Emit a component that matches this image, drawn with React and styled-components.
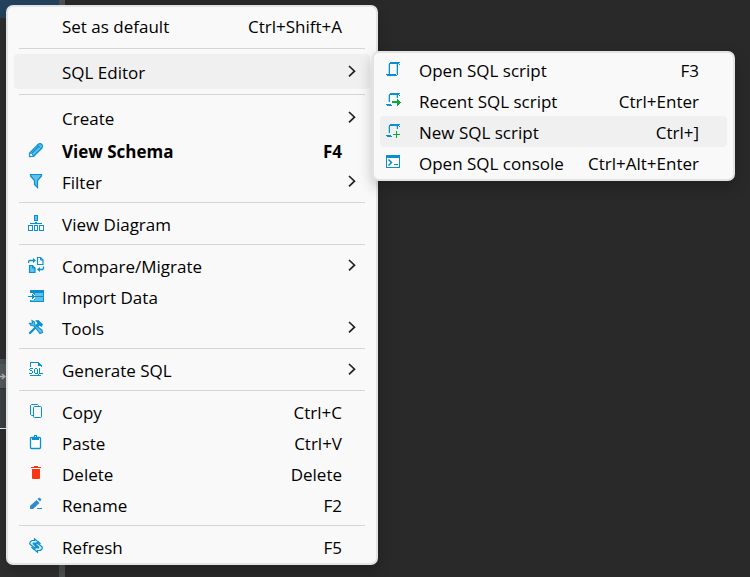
import React from "react";
import styled, { createGlobalStyle, css } from "styled-components";

const GlobalStyle = createGlobalStyle`
  *, *::before, *::after { box-sizing: border-box; }
  body {
    margin: 0;
    background: #292929;
    font-family: "Open Sans", "Noto Sans", sans-serif;
    font-size: 17px;
    color: #000;
  }
`;

const Workspace = styled.main`
  position: relative;
  display: flex;
  min-height: 100vh;
  overflow: hidden;
  background: #292929;
`;

const Sidebar = styled.div`
  display: flex;
  flex-direction: column;
  width: 59px;
  background: #2f2f2f;
`;

const SelectedNode = styled.div`
  height: 18px;
  background: #24425e;
`;

const TreeSpace = styled.div`
  height: 341px;
`;

const PanelTab = styled.div`
  display: flex;
  align-items: center;
  height: 29px;
  background: #555b5e;
  border-top: 5px solid #485156;
`;

const PanelBody = styled.div`
  height: 41px;
  background: #3b4144;
  border-top: 1px solid #303538;
  border-bottom: 1px solid #f2f2f2;
`;

const Splitter = styled.div`
  width: 6px;
  background: #4b5051;
`;

const MenuPanel = styled.div`
  position: absolute;
  left: ${({ $left }) => $left}px;
  top: ${({ $top }) => $top}px;
  min-width: ${({ $minWidth }) => $minWidth}px;
  padding: 1px 6px;
  border: 2px solid #e3e3e3;
  border-radius: 7px;
  background: #f9f9f9;
  box-shadow: 0 6px 14px rgba(0, 0, 0, 0.22);
`;

const Divider = styled.hr`
  height: 1px;
  margin: 5px;
  border: 0;
  background: #d5d5d5;
`;

const MenuItem = styled.button`
  display: grid;
  grid-template-columns: 17px 1fr auto 28px;
  align-items: center;
  width: 100%;
  height: ${({ $tall }) => ($tall ? 35 : 31)}px;
  padding: 0 0 0 ${({ $inset }) => $inset}px;
  border: 0;
  border-radius: 4px;
  background: ${({ $active }) => ($active ? "#f0f0f0" : "transparent")};
  color: inherit;
  font: inherit;
  line-height: 25px;
  text-align: left;
  white-space: nowrap;
  ${({ $strong }) => $strong && css`font-weight: 700;`}
`;

const Label = styled.span`
  padding: 2px 20px 0 17px;
`;

const Shortcut = styled.span`
  padding-top: 2px;
`;

const IconSvg = styled.svg`
  display: block;
  width: 17px;
  height: 17px;
`;

const ArrowSvg = styled.svg`
  display: block;
  width: 8px;
  height: 13px;
  margin-left: 6px;
`;

const TabArrow = styled.svg`
  display: block;
  width: 6px;
  height: 9px;
`;

const BLUE = "#0a8fd0";
const LIGHT = "#5fc0ec";
const PALE = "#a9dbf2";
const GREEN = "#0aa83c";

const icons = {
  pencil: (
    <>
      <path d="M1.500 11.200 10.300 2.200Q12.300 .8 13.800 2.500T14 6L5.500 14.300 1.500 14.500Z" fill={LIGHT} stroke={BLUE} strokeWidth="1.200" />
      <path d="M1.700 11.200H3.500L5 13V14.400H1.700Z" fill="#fff" stroke={BLUE} />
      <path d="M4 11 11 4" stroke={BLUE} strokeWidth="1.200" />
      <path d="M9.500 3 13 6.500" stroke={BLUE} />
    </>
  ),
  filter: (
    <path d="M2.500 1.500H13.500V3L9.500 7.500V14.500L6.500 11.500V7.500L2.500 3Z" fill={LIGHT} stroke={BLUE} strokeWidth="1.200" />
  ),
  diagram: (
    <g shapeRendering="crispEdges">
      <path d="M6 0h4v6H6z" fill={BLUE} />
      <path d="M7 1h2v4H7z" fill={LIGHT} />
      <path d="M7 7h2v1h5v1H2V8h5z" fill={BLUE} />
      <path d="M0 10h5v6H0zM6 10h4v6H6zM11 10h5v6h-5z" fill={BLUE} />
      <path d="M1 11h3v4H1zM7 11h2v4H7zM12 11h3v4h-3z" fill="#fff" />
    </g>
  ),
  compare: (
    <>
      <path d="M9.500 .5h3l2.500 2.500v4.500H9.500z" fill="#fff" stroke={BLUE} strokeWidth="1.200" />
      <path d="M12.500 .5V3H15" fill="none" stroke={BLUE} />
      <path d="M1.500 8.500h3L7 11v4.500H1.500z" fill={LIGHT} stroke={BLUE} strokeWidth="1.200" />
      <path d="M4.500 8.500V11H7" fill="none" stroke={BLUE} />
      <path d="M.5 6V4.500L1.500 3.500H6M15.500 9.500V11.500l-1 1H10.500" fill="none" stroke={BLUE} strokeWidth="1.300" />
      <path d="M5 1 8 3.500 5 6zM12 10 9 12.500 12 15z" fill={BLUE} />
    </>
  ),
  import: (
    <g shapeRendering="crispEdges">
      <path d="M2 2h14v12H2z" fill={BLUE} />
      <path d="M7 5h8v3H7zM7 9h8v4H7zM3 12h4v1H3z" fill={LIGHT} />
      <path d="M0 5h5v1h1v1h1v4H6v1H0z" fill="#f9f9f9" />
      <path d="M0 8h4V6h1v1h1v1h1v1H6v1H5v1H4V9H0z" fill={BLUE} />
    </g>
  ),
  tools: (
    <>
      <path d="M2 14 9 7" stroke={BLUE} strokeWidth="2.200" strokeLinecap="round" />
      <path d="M7 1.500 10.500 1 15 5.500 13.500 8 11.500 6.500 9.500 8.500 7.500 6.500 9.500 4Z" fill={BLUE} />
      <path d="M1.500 4.500 3 6.500 6 7l6 7.500 2.500-1L14 11 7 6 6.500 3 4 1.500 4.500 4Z" fill={LIGHT} stroke={BLUE} strokeWidth="1.100" />
    </>
  ),
  sql: (
    <g shapeRendering="crispEdges" fill={BLUE}>
      <path d="M2 1h8v1H3v4H2zM10 1h1v1h1v1h1v1h1v2h-1V5h-3z" />
      <path d="M2 7h3v1H2zM1 8h1v1H1zM2 9h2v1H2zM4 10h1v2H4zM1 12h3v1H1z" />
      <path d="M7 7h2v1H7zM6 8h1v4H6zM9 8h1v4H9zM7 12h3v1H7zM10 13h1v1h-1z" />
      <path d="M11 7h1v5h3v1h-4zM2 14h11v1H2z" />
    </g>
  ),
  copy: (
    <g fill="#f9f9f9" stroke={BLUE} strokeWidth="1">
      <path d="M10.500 3V2.500l-1-1H3.500l-1 1v9l1 1H5" fill="none" />
      <rect x="5.500" y="3.500" width="8" height="11" rx="1.200" />
    </g>
  ),
  paste: (
    <>
      <rect x="2.500" y="3.500" width="10" height="11" rx="1" fill="#fff" stroke={BLUE} strokeWidth="1.300" />
      <path d="M4 3h2V1h3v2h2v3H4z" fill={BLUE} />
      <path d="M7 2h1v1H7z" fill="#fff" />
    </>
  ),
  trash: (
    <g fill="#fb3413">
      <path d="M3 2h3V1h4v1h3v1H3z" shapeRendering="crispEdges" />
      <path d="M4 4h8v9q0 1-1 1H5q-1 0-1-1z" />
    </g>
  ),
  rename: (
    <g fill="#2f8bd0">
      <path d="M2 13v-3l6.500-6 3 3L5 13z" />
      <path d="M9.500 3 11.500 1.500 13.500 3.500 12 5.500z" />
      <path d="M9 12h5v1H9z" shapeRendering="crispEdges" />
    </g>
  ),
  refresh: (
    <g fill="none" stroke={BLUE} strokeWidth="1.200">
      <path d="M6 9.500 1.700 6Q1.500 3.500 4 2.500H6.500V.8L10 3.700 7 6.500V5H5.500Q5 5.500 5.500 6L8.500 8.500Z" fill="#d5effb" />
      <path d="M10 5.500 14.300 9Q14.500 11.500 12 12.500H9.500v1.700L6 11.300 9 8.500V10h1.500Q11 9.500 10.500 9L7.500 6.500Z" fill="#d5effb" />
      <path d="M10 3.500 12.500 6M3.500 9 6 11.500" />
    </g>
  ),
  script: (
    <g shapeRendering="crispEdges">
      <path d="M5 1h10v1H5zM4 2h10v1h1v1h-1V3H4zM1 13h10v1H1zM2 14h10v1H2z" fill={BLUE} />
      <path d="M4 3h1v10H4zM12 3h1v11h-1z" fill={BLUE} />
      <path d="M3 3h1v10H3zM11 3h1v10h-1z" fill={PALE} />
    </g>
  ),
  recent: (
    <g shapeRendering="crispEdges">
      <path d="M5 1h10v1H5zM4 2h10v1h1v1h-1V3H4zM1 12h5v1H1zM2 13h5v1H2z" fill={BLUE} />
      <path d="M4 3h1v7H4zM12 3h1v3h-1z" fill={BLUE} />
      <path d="M3 3h1v7H3zM11 3h1v3h-1z" fill={PALE} />
      <path d="M7 9h5V7h1v1h1v1h1v1h1v1h-1v1h-1v1h-1v1h-1v-3H7z" fill={GREEN} />
    </g>
  ),
  create: (
    <g shapeRendering="crispEdges">
      <path d="M5 1h10v1H5zM4 2h10v1h1v1h-1V3H4zM1 12h5v1H1zM2 13h5v1H2z" fill={BLUE} />
      <path d="M4 3h1v7H4zM12 3h1v3h-1z" fill={BLUE} />
      <path d="M3 3h1v7H3zM11 3h1v3h-1z" fill={PALE} />
      <path d="M11 8h1v3h3v1h-3v3h-1v-3H8v-1h3z" fill={GREEN} />
    </g>
  ),
  console: (
    <>
      <path d="M1 1h14v13H1z" fill={BLUE} />
      <path d="M2 4h12v9H2z" fill="#fff" />
      <path d="M3.500 5.500 6.500 8.500 3.500 11.500" fill="none" stroke={BLUE} strokeWidth="1.500" />
      <path d="M9 10h4v1H9z" fill={BLUE} />
    </>
  ),
};

const mainGroups = [
  [{ label: "Set as default", shortcut: "Ctrl+Shift+A", tall: true }],
  [{ label: "SQL Editor", submenu: true, active: true, tall: true }],
  [
    { label: "Create", submenu: true, tall: true },
    { label: "View Schema", shortcut: "F4", icon: "pencil", strong: true },
    { label: "Filter", submenu: true, icon: "filter" },
  ],
  [{ label: "View Diagram", icon: "diagram" }],
  [
    { label: "Compare/Migrate", submenu: true, icon: "compare" },
    { label: "Import Data", icon: "import" },
    { label: "Tools", submenu: true, icon: "tools" },
  ],
  [{ label: "Generate SQL", submenu: true, icon: "sql" }],
  [
    { label: "Copy", shortcut: "Ctrl+C", icon: "copy" },
    { label: "Paste", shortcut: "Ctrl+V", icon: "paste" },
    { label: "Delete", shortcut: "Delete", icon: "trash" },
    { label: "Rename", shortcut: "F2", icon: "rename" },
  ],
  [{ label: "Refresh", shortcut: "F5", icon: "refresh" }],
];

const editorGroups = [
  [
    { label: "Open SQL script", shortcut: "F3", icon: "script" },
    { label: "Recent SQL script", shortcut: "Ctrl+Enter", icon: "recent" },
    { label: "New SQL script", shortcut: "Ctrl+]", icon: "create", active: true },
    { label: "Open SQL console", shortcut: "Ctrl+Alt+Enter", icon: "console" },
  ],
];

function Item({ item, inset }) {
  return (
    <MenuItem
      type="button"
      role="menuitem"
      aria-haspopup={item.submenu ? "menu" : undefined}
      $inset={inset}
      $tall={item.tall}
      $active={item.active}
      $strong={item.strong}
    >
      <IconSvg viewBox="0 0 17 17" aria-hidden="true">{icons[item.icon]}</IconSvg>
      <Label>{item.label}</Label>
      <Shortcut>{item.shortcut}</Shortcut>
      {item.submenu && (
        <ArrowSvg viewBox="0 0 8 13" aria-hidden="true">
          <path d="M1 1 6.500 6.200 1 11.400" fill="none" stroke="#222" strokeWidth="1.700" />
        </ArrowSvg>
      )}
    </MenuItem>
  );
}

function Menu({ label, groups, left, top, minWidth, inset }) {
  return (
    <MenuPanel role="menu" aria-label={label} $left={left} $top={top} $minWidth={minWidth}>
      {groups.map((group, index) => (
        <React.Fragment key={group[0].label}>
          {index > 0 && <Divider />}
          {group.map((item) => (
            <Item key={item.label} item={item} inset={inset} />
          ))}
        </React.Fragment>
      ))}
    </MenuPanel>
  );
}

export default function App() {
  return (
    <>
      <GlobalStyle />
      <Workspace>
        <Sidebar>
          <SelectedNode />
          <TreeSpace />
          <PanelTab>
            <TabArrow viewBox="0 0 6 9" aria-hidden="true">
              <path d="M0 4.500h4M2 2l3 2.500L2 7" fill="none" stroke="#b4b8ba" strokeWidth="1.400" />
            </TabArrow>
          </PanelTab>
          <PanelBody />
        </Sidebar>
        <Splitter />
        <Menu label="Schema" groups={mainGroups} left={6} top={5} minWidth={372} inset={14} />
        <Menu label="SQL Editor" groups={editorGroups} left={372} top={51} minWidth={363} inset={5} />
      </Workspace>
    </>
  );
}
